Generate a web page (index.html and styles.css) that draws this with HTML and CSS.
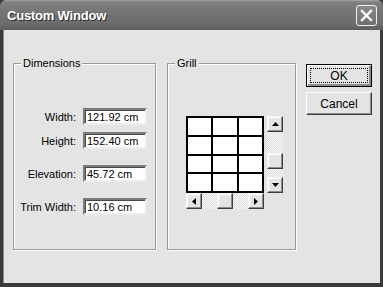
FILE: index.html
```html
<!DOCTYPE html>
<html lang="en">
<head>
    <meta charset="UTF-8">
    <title>Custom Window</title>
    <link rel="stylesheet" href="styles.css">
</head>
<body>
    <div class="window">
        <div class="titlebar">
            <span class="title">Custom Window</span>
            <button class="close" aria-label="Close">
                <svg width="13" height="13" viewBox="0 0 13 13"><path d="M2 2 L11 11 M11 2 L2 11" stroke="#fff" stroke-width="2.4" stroke-linecap="square"/></svg>
            </button>
        </div>
        <div class="client">
            <fieldset class="group dims">
                <legend>Dimensions</legend>
                <div class="field">
                    <label for="width">Width:</label>
                    <input id="width" type="text" value="121.92 cm">
                </div>
                <div class="field">
                    <label for="height">Height:</label>
                    <input id="height" type="text" value="152.40 cm">
                </div>
                <div class="field far">
                    <label for="elevation">Elevation:</label>
                    <input id="elevation" type="text" value="45.72 cm">
                </div>
                <div class="field far">
                    <label for="trim">Trim Width:</label>
                    <input id="trim" type="text" value="10.16 cm">
                </div>
            </fieldset>

            <fieldset class="group grill">
                <legend>Grill</legend>
                <div class="grill-box">
                    <div class="panes">
                        <div></div><div></div><div></div>
                        <div></div><div></div><div></div>
                        <div></div><div></div><div></div>
                        <div></div><div></div><div></div>
                    </div>
                    <div class="vscroll">
                        <div class="sb-btn"><svg width="7" height="4" viewBox="0 0 7 4"><polygon points="0,4 7,4 3.5,0" fill="#000"/></svg></div>
                        <div class="track v-top"></div>
                        <div class="sb-btn"></div>
                        <div class="track fill"></div>
                        <div class="sb-btn"><svg width="7" height="4" viewBox="0 0 7 4"><polygon points="0,0 7,0 3.5,4" fill="#000"/></svg></div>
                    </div>
                    <div class="hscroll">
                        <div class="sb-btn"><svg width="4" height="7" viewBox="0 0 4 7"><polygon points="4,0 4,7 0,3.5" fill="#000"/></svg></div>
                        <div class="track h-left"></div>
                        <div class="sb-btn"></div>
                        <div class="track fill"></div>
                        <div class="sb-btn"><svg width="4" height="7" viewBox="0 0 4 7"><polygon points="0,0 0,7 4,3.5" fill="#000"/></svg></div>
                    </div>
                </div>
            </fieldset>

            <div class="buttons">
                <button class="btn default"><span class="focus">OK</span></button>
                <button class="btn">Cancel</button>
            </div>
        </div>
    </div>
</body>
</html>
```

FILE: styles.css
```css
/* janela estilo Windows XP em tons de cinza */
body {
    margin: 0;
    padding: 0;
    background: #e4e4e4;
    font-family: "Liberation Sans", Arial, sans-serif;
    font-size: 11px;
    color: #000;
}
.window {
    width: 383px;
    height: 287px;
    display: flex;
    flex-direction: column;
    background: #3a3a3a;
}
.titlebar {
    height: 30px;
    display: flex;
    align-items: center;
    justify-content: space-between;
    padding: 0 6px 0 7px;
    background: linear-gradient(#a4a4a4 0, #808080 2px, #757575 40%, #6c6c6c 80%, #5e5e5e 100%);
    border-radius: 6px 6px 0 0;
    flex-shrink: 0;
}
.title {
    color: #fff;
    font-weight: bold;
    font-size: 13px;
    letter-spacing: -0.2px;
    text-shadow: 1px 1px 0 #2e2e2e;
}
.close {
    width: 21px;
    height: 21px;
    padding: 0;
    display: flex;
    align-items: center;
    justify-content: center;
    background: linear-gradient(#8a8a8a, #6e6e6e);
    border: 1px solid #f2f2f2;
    border-radius: 3px;
}
.client {
    flex: 1;
    display: flex;
    align-items: flex-start;
    background: #e4e4e4;
    margin: 0 3px 4px 3px;
    padding: 27px 0 0 9px;
    border-left: 1px solid #8a8a8a;
}
.group {
    box-sizing: border-box;
    height: 193px;
    margin: 0;
    padding: 0;
    border: 1px solid #9a9a9a;
    box-shadow: inset 1px 1px 0 #fff, 1px 1px 0 #fff;
}
.group legend {
    margin-left: 7px;
    padding: 0 2px;
    line-height: 13px;
    background: #e4e4e4;
}
.dims {
    width: 143px;
    padding-top: 38px;
}
.grill {
    width: 129px;
    margin-left: 11px;
    padding-top: 46px;
}
.field {
    display: flex;
    align-items: center;
    height: 17px;
}
.field + .field {
    margin-top: 7px;
}
.field.far {
    margin-top: 16px;
}
.field label {
    width: 62px;
    margin-right: 7px;
    text-align: right;
}
.field input {
    box-sizing: border-box;
    width: 64px;
    height: 17px;
    margin: 0;
    padding: 0 0 0 2px;
    font-family: inherit;
    font-size: 11px;
    background: #fff;
    border: 2px solid;
    border-color: #7c7c7c #ececec #ececec #7c7c7c;
    box-shadow: inset 1px 1px 0 #4a4a4a;
    outline: none;
}
.grill-box {
    display: grid;
    grid-template-columns: 78px 16px;
    grid-template-rows: 77px 16px;
    column-gap: 3px;
    margin-left: 18px;
}
.panes {
    box-sizing: border-box;
    display: grid;
    grid-template-columns: repeat(3, 1fr);
    grid-template-rows: repeat(4, 1fr);
    gap: 2px;
    padding: 2px;
    background: #000;
}
.panes div {
    background: #fff;
}
.vscroll {
    display: flex;
    flex-direction: column;
}
.hscroll {
    display: flex;
}
.sb-btn {
    box-sizing: border-box;
    width: 16px;
    height: 16px;
    flex-shrink: 0;
    display: flex;
    align-items: center;
    justify-content: center;
    background: #e4e4e4;
    border: 1px solid;
    border-color: #f4f4f4 #3e3e3e #3e3e3e #f4f4f4;
    box-shadow: inset -1px -1px 0 #8c8c8c, inset 1px 1px 0 #fff;
}
.track {
    background: repeating-conic-gradient(#fafafa 0 25%, #dcdcdc 0 50%) 0 0 / 2px 2px;
}
.track.fill {
    flex: 1;
}
.v-top {
    height: 21px;
}
.h-left {
    width: 15px;
    flex-shrink: 0;
}
.buttons {
    display: flex;
    flex-direction: column;
    gap: 5px;
    margin: 7px 0 0 10px;
}
.btn {
    box-sizing: border-box;
    width: 66px;
    height: 23px;
    margin: 0;
    padding: 0;
    font-family: inherit;
    font-size: 12px;
    color: #000;
    background: #e4e4e4;
    border: 1px solid;
    border-color: #fff #3e3e3e #3e3e3e #fff;
    box-shadow: inset -1px -1px 0 #8c8c8c;
}
.btn.default {
    border: 1px solid #000;
    box-shadow: inset 1px 1px 0 #fff, inset -2px -2px 0 #8c8c8c;
    padding: 3px;
}
.focus {
    display: flex;
    align-items: center;
    justify-content: center;
    height: 100%;
    border: 1px dotted #000;
    box-sizing: border-box;
}
```
